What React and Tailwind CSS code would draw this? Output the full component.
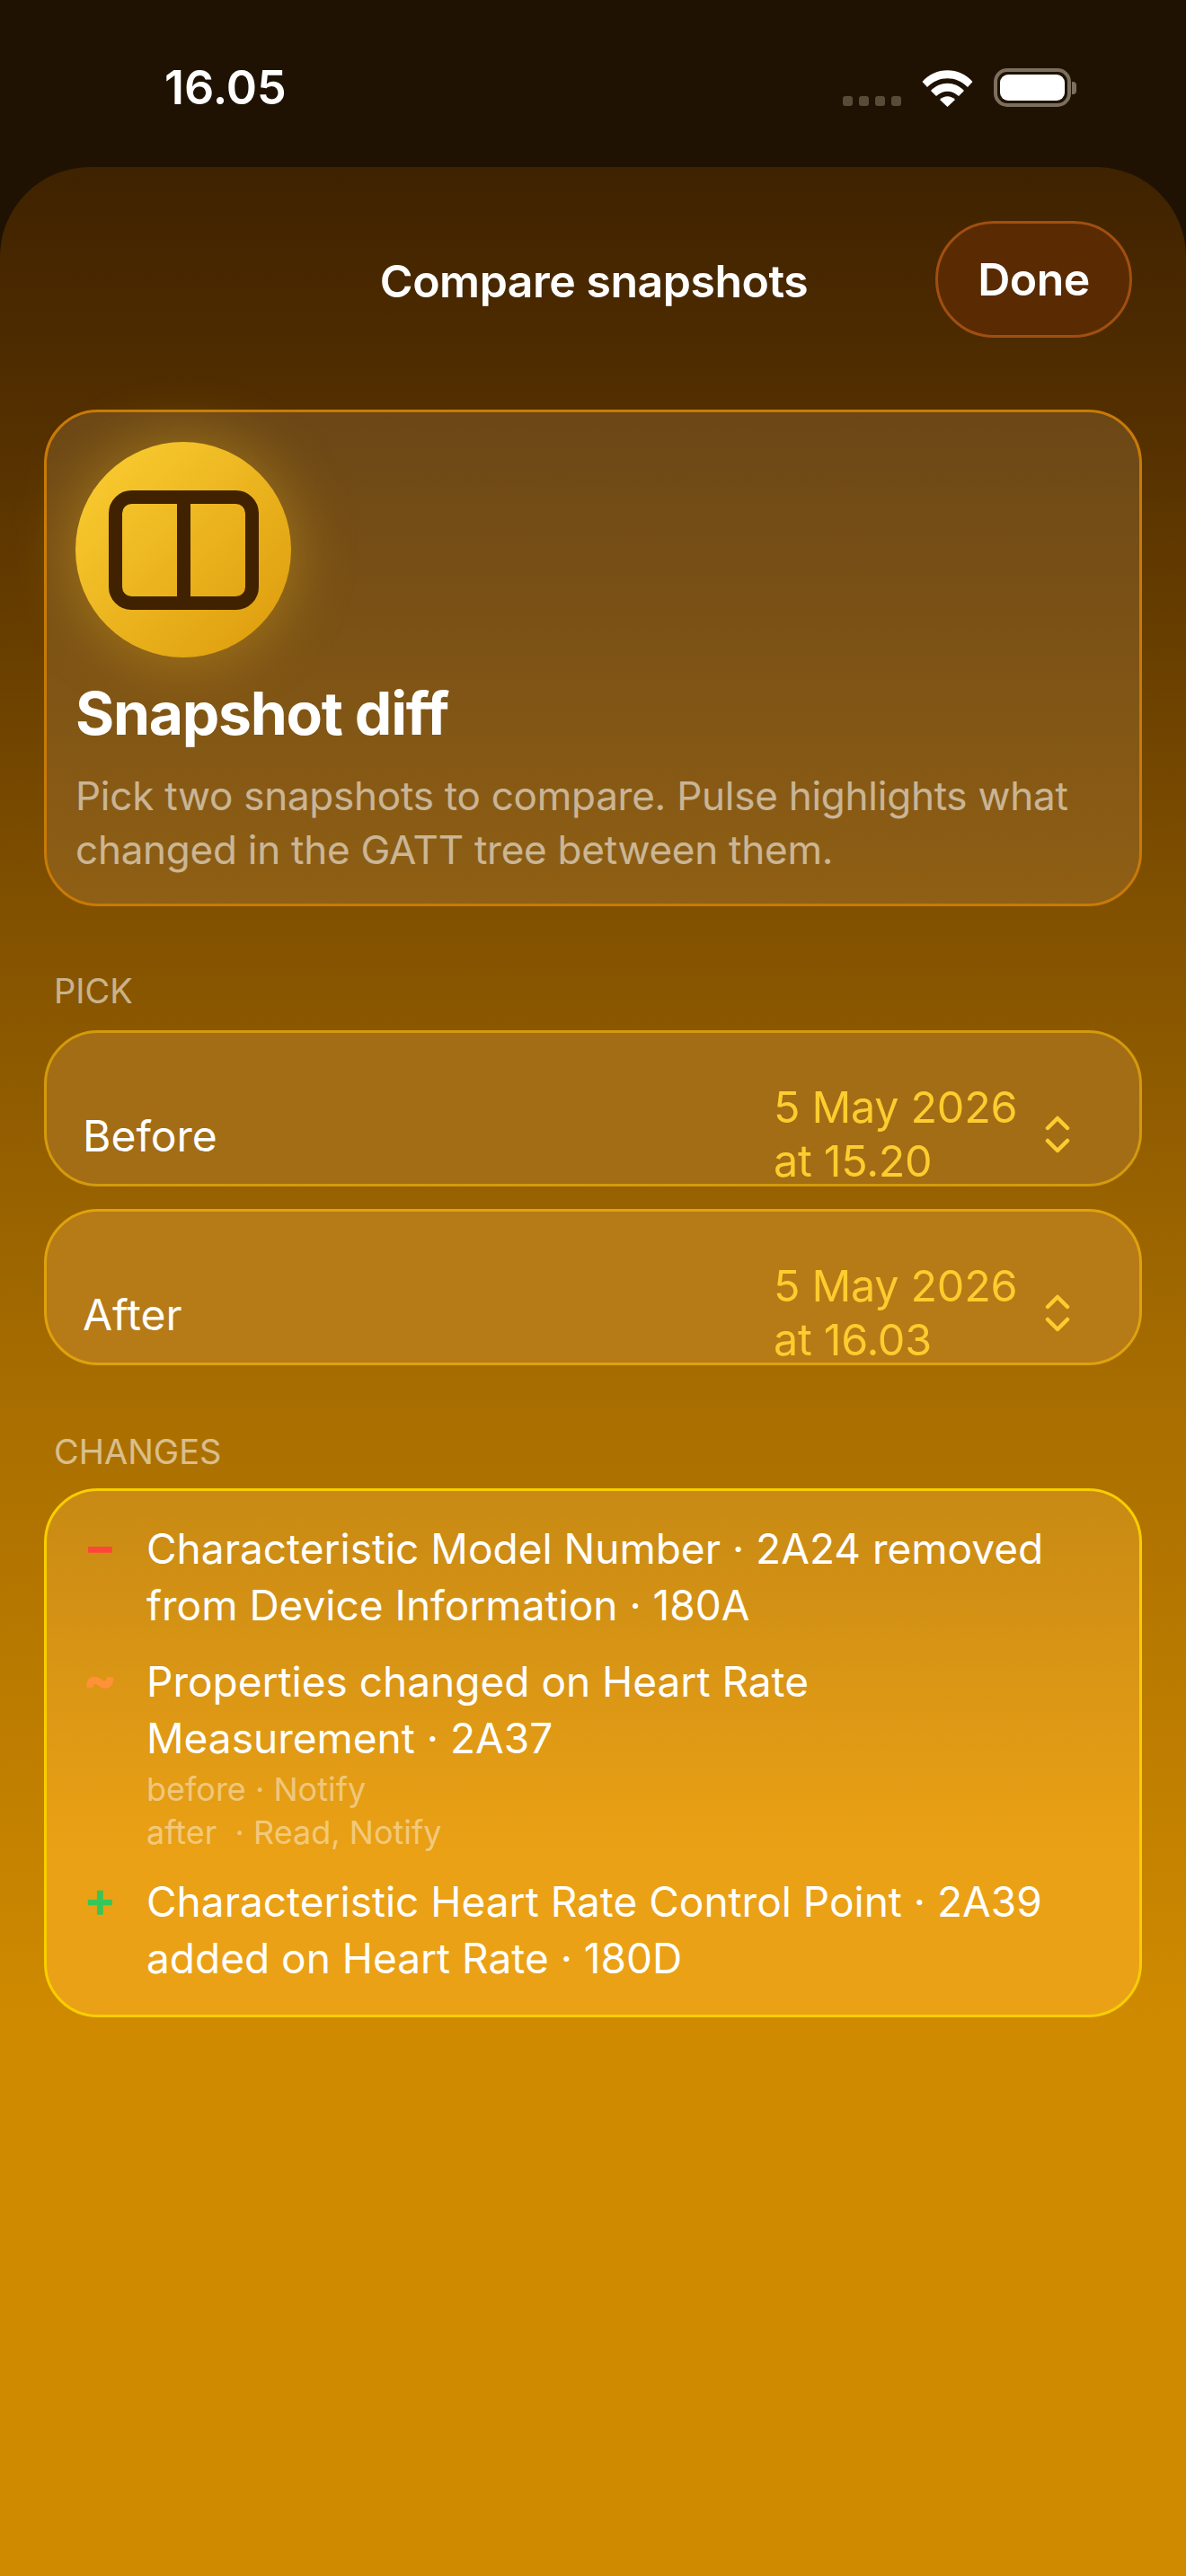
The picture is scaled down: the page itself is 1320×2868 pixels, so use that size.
function StatusBar() {
  return (
    <div className="flex h-[186px] items-start justify-between pl-[183px] pr-[122px] pt-[70px]">
      <span className="text-[52px] leading-[56px] font-semibold text-white">16.05</span>
      <div className="flex items-end pt-[6px]">
        <div className="mb-[1px] flex gap-[7px]">
          <span className="h-[11px] w-[11px] rounded-[3px] bg-[#5a4b39]" />
          <span className="h-[11px] w-[11px] rounded-[3px] bg-[#5a4b39]" />
          <span className="h-[11px] w-[11px] rounded-[3px] bg-[#5a4b39]" />
          <span className="h-[11px] w-[11px] rounded-[3px] bg-[#5a4b39]" />
        </div>
        <svg className="ml-[23px]" width="57" height="41" viewBox="0 0 57 41" fill="#fff">
          <path d="M0.5 13C15-4 42-4 56.5 13L51 19C38 6 19 6 6 19Z" />
          <path d="M10 23C20 12 37 12 47 23L41 29C33 22 24 22 16 29Z" />
          <path d="M20 33C25 28 32 28 37 33L28.5 41Z" />
        </svg>
        <div className="ml-[23px] flex items-center">
          <div className="h-[43px] w-[86px] rounded-[15px] border-[4px] border-[#7c6f60] p-[3px]">
            <div className="h-full w-full rounded-[9px] bg-white" />
          </div>
          <div className="ml-[1px] h-[14px] w-[5px] rounded-r-[4px] bg-[#7c6f60]" />
        </div>
      </div>
    </div>
  );
}

function SectionLabel({ children, className }) {
  return <p className={["px-[60px] text-[38px] leading-[44px] text-white/55 uppercase", className].join(" ")}>{children}</p>;
}

function PickRow({ label, date, time, className }) {
  return (
    <div className={["mx-[49px] flex h-[174px] items-center justify-between rounded-[60px] border-[3px] pl-[40px] pr-[77px] pt-[58px]", className].join(" ")}>
      <span className="pt-[3px] text-[48px] leading-[60px] text-white">{label}</span>
      <div className="flex items-center gap-[31px]">
        <div className="w-[271px] text-[48.5px] leading-[60px] tracking-[-0.3px] whitespace-nowrap text-[#fdcc2f]">
          <div>{date}</div>
          <div>{time}</div>
        </div>
        <svg width="28" height="42" viewBox="0 0 28 42" fill="none" stroke="#fdcc2f" strokeWidth="4.5" strokeLinecap="round" strokeLinejoin="round">
          <path d="M3 14L14 3L25 14" />
          <path d="M3 28L14 39L25 28" />
        </svg>
      </div>
    </div>
  );
}

function Change({ glyph, tone, lines, children, className }) {
  return (
    <div className={["flex", className].join(" ")}>
      <span className={["w-[111px] pl-[41px] text-[54px] leading-[57px] font-bold", tone].join(" ")}>{glyph}</span>
      <div className="flex-1">
        {lines.map((line) => (
          <div key={line} className="text-[46px] leading-[63px] text-white">{line}</div>
        ))}
        {children}
      </div>
    </div>
  );
}

export default function App() {
  return (
    <div className="min-h-[2868px] w-[1320px] overflow-hidden bg-[#1f1203] font-[Inter,sans-serif]">
      <StatusBar />
      <div className="h-[2682px] rounded-t-[100px] bg-[linear-gradient(180deg,#3f2200_0px,#522e00_260px,#845300_860px,#a96e00_1380px,#cf8a00_2060px,#cf8a00_100%)]">
        <div className="grid h-[270px] grid-cols-[1fr_auto_1fr] items-start pl-[62px] pr-[60px] pt-[60px]">
          <span />
          <h1 className="pt-[38px] text-[50px] leading-[58px] font-semibold tracking-[-0.5px] text-white">Compare snapshots</h1>
          <div className="flex justify-end">
            <button type="button" className="h-[130px] w-[219px] rounded-[65px] border-[3px] border-[#a04f10] bg-[#5a2b02] text-[50px] font-semibold tracking-[-0.5px] text-white">Done</button>
          </div>
        </div>

        <section className="mx-[49px] h-[553px] rounded-[60px] border-[3px] border-[#c87a08] bg-[linear-gradient(180deg,#6c4716,#8f5f14)] px-[32px] pt-[33px]">
          <div className="flex h-[240px] w-[240px] items-center justify-center rounded-full bg-[linear-gradient(135deg,#fbcf33,#dc9a0b)] shadow-[0_0_70px_rgba(245,197,40,0.38)]">
            <svg width="167" height="133" viewBox="0 0 167 133" fill="none" stroke="#412200" strokeWidth="15">
              <rect x="7.5" y="7.5" width="152" height="118" rx="18" />
              <path d="M83.5 7V126" />
            </svg>
          </div>
          <h2 className="mt-[22px] text-[66px] leading-[80px] font-bold tracking-[-1.3px] text-white">Snapshot diff</h2>
          <p className="mt-[22px] text-[44px] leading-[60px] tracking-[-0.25px] text-white/55">Pick two snapshots to compare. Pulse highlights what changed in the GATT tree between them.</p>
        </section>

        <SectionLabel className="mt-[72px]">Pick</SectionLabel>
        <div className="mt-[22px] flex flex-col gap-[25px]">
          <PickRow label="Before" date="5 May 2026" time="at 15.20" className="border-[#d49a0c] bg-[#a36d15]" />
          <PickRow label="After" date="5 May 2026" time="at 16.03" className="border-[#dfa20e] bg-[#b67a16]" />
        </div>

        <SectionLabel className="mt-[74px]">Changes</SectionLabel>
        <section className="mx-[49px] mt-[19px] h-[589px] rounded-[60px] border-[3px] border-[#f8ce00] bg-[linear-gradient(180deg,#c88a14,#eba115_70%)] pt-[33px]">
          <Change glyph="−" tone="text-[#ff453a]" lines={["Characteristic Model Number · 2A24 removed", "from Device Information · 180A"]} />
          <Change glyph="~" tone="text-[#ff9238] [-webkit-text-stroke:1.5px_#ff9238]" className="mt-[22px]" lines={["Properties changed on Heart Rate", "Measurement · 2A37"]}>
            <div className="pt-[1px] text-[36px] leading-[48px] text-white/45 whitespace-pre">
              <div>before · Notify</div>
              <div>after  · Read, Notify</div>
            </div>
          </Change>
          <Change glyph="+" tone="text-[#34c759]" className="mt-[22px]" lines={["Characteristic Heart Rate Control Point · 2A39", "added on Heart Rate · 180D"]} />
        </section>
      </div>
    </div>
  );
}
